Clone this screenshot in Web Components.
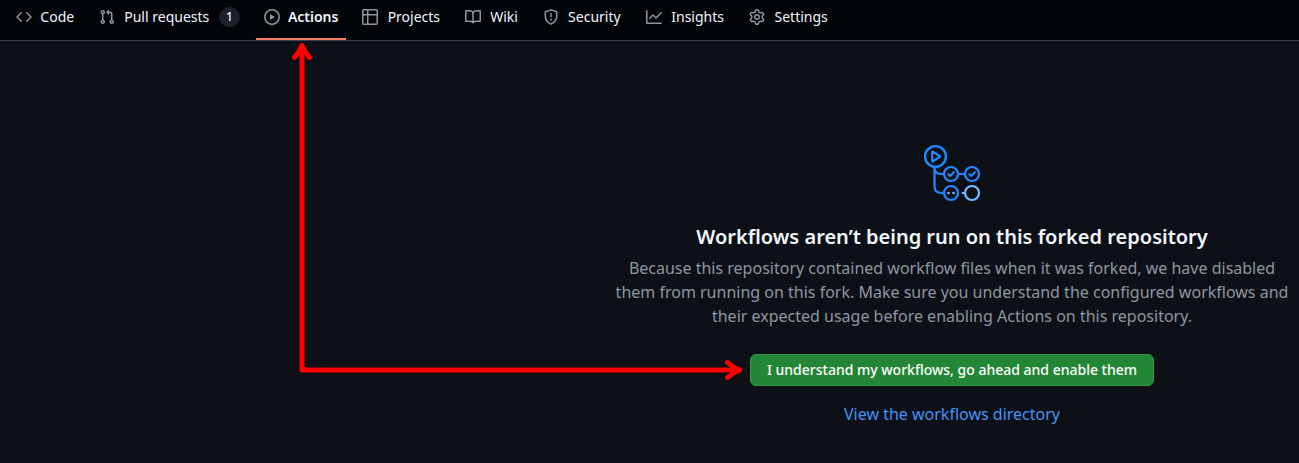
<!DOCTYPE html>
<html lang="en">
<head>
<meta charset="utf-8">
<meta name="viewport" content="width=device-width">
<title>Actions</title>
<style>
html, body { margin: 0; min-height: 100%; background: #0d1117; }
body { font-family: "Noto Sans", sans-serif; color: #f0f6fc; }
</style>
</head>
<body>
<actions-page></actions-page>
<script>
const icons = {
  code: '<path d="m11.28 3.22 4.25 4.25a.75.75 0 0 1 0 1.06l-4.25 4.25a.749.749 0 0 1-1.275-.326.749.749 0 0 1 .215-.734L13.94 8l-3.72-3.72a.749.749 0 0 1 .326-1.275.749.749 0 0 1 .734.215Zm-6.56 0a.751.751 0 0 1 1.042.018.751.751 0 0 1 .018 1.042L2.06 8l3.72 3.72a.749.749 0 0 1-.326 1.275.749.749 0 0 1-.734-.215L.47 8.53a.75.75 0 0 1 0-1.06Z"/>',
  pull: '<path d="M1.5 3.25a2.25 2.25 0 1 1 3 2.122v5.256a2.251 2.251 0 1 1-1.5 0V5.372A2.25 2.25 0 0 1 1.5 3.25Zm5.677-.177L9.573.677A.25.25 0 0 1 10 .854V2.5h1A2.5 2.5 0 0 1 13.5 5v5.628a2.251 2.251 0 1 1-1.5 0V5a1 1 0 0 0-1-1h-1v1.646a.25.25 0 0 1-.427.177L7.177 3.427a.25.25 0 0 1 0-.354ZM3.75 2.5a.75.75 0 1 0 0 1.5.75.75 0 0 0 0-1.5Zm0 9.5a.75.75 0 1 0 0 1.5.75.75 0 0 0 0-1.5Zm8.25.75a.75.75 0 1 0 1.5 0 .75.75 0 0 0-1.5 0Z"/>',
  play: '<path d="M8 0a8 8 0 1 1 0 16A8 8 0 0 1 8 0ZM1.5 8a6.5 6.5 0 1 0 13 0 6.5 6.5 0 0 0-13 0Zm4.879-2.773 4.264 2.559a.25.25 0 0 1 0 .428l-4.264 2.559A.25.25 0 0 1 6 10.559V5.442a.25.25 0 0 1 .379-.215Z"/>',
  table: '<path d="M0 1.75C0 .784.784 0 1.75 0h12.5C15.216 0 16 .784 16 1.75v12.5A1.75 1.75 0 0 1 14.25 16H1.75A1.75 1.75 0 0 1 0 14.25ZM6.5 6.5v8h7.75a.25.25 0 0 0 .25-.25V6.5Zm8-1.5V1.75a.25.25 0 0 0-.25-.25H6.5V5Zm-13 1.5v7.75c0 .138.112.25.25.25H5v-8ZM5 5V1.5H1.75a.25.25 0 0 0-.25.25V5Z"/>',
  book: '<path d="M0 1.75A.75.75 0 0 1 .75 1h4.253c1.227 0 2.317.59 3 1.501A3.743 3.743 0 0 1 11.006 1h4.245a.75.75 0 0 1 .75.75v10.5a.75.75 0 0 1-.75.75h-4.507a2.25 2.25 0 0 0-1.591.659l-.622.621a.75.75 0 0 1-1.06 0l-.622-.621A2.25 2.25 0 0 0 5.258 13H.75a.75.75 0 0 1-.75-.75Zm7.251 10.324.004-5.073-.002-2.253A2.25 2.25 0 0 0 5.003 2.5H1.5v9h3.757a3.75 3.75 0 0 1 1.994.574ZM8.755 4.75l-.004 7.322a3.752 3.752 0 0 1 1.992-.572H14.5v-9h-3.495a2.25 2.25 0 0 0-2.25 2.25Z"/>',
  shield: '<path fill="none" stroke="currentColor" stroke-width="1.5" stroke-linejoin="round" d="m8 .85 5.75 1.85V7c0 3.8-2.5 6.6-5.75 8.1C4.75 13.6 2.25 10.8 2.25 7V2.7Z"/><path d="M7.25 4.75a.75.75 0 0 1 1.5 0v3a.75.75 0 0 1-1.5 0Z"/><circle cx="8" cy="10.5" r="1"/>',
  graph: '<path d="M1.5 1.75V13.5h13.75a.75.75 0 0 1 0 1.5H.75a.75.75 0 0 1-.75-.75V1.75a.75.75 0 0 1 1.5 0Zm14.28 2.53-5.25 5.25a.75.75 0 0 1-1.06 0L7 7.06 4.28 9.78a.751.751 0 0 1-1.042-.018.751.751 0 0 1-.018-1.042l3.25-3.25a.75.75 0 0 1 1.06 0L10 7.94l4.72-4.72a.751.751 0 0 1 1.042.018.751.751 0 0 1 .018 1.042Z"/>',
  gear: '<path d="M8 0a8.2 8.2 0 0 1 .701.031C9.444.095 9.99.645 10.16 1.29l.288 1.107c.018.066.079.158.212.224.231.114.454.243.668.386.123.082.233.09.299.071l1.103-.303c.644-.176 1.392.021 1.82.63.27.385.506.792.704 1.218.315.675.111 1.422-.364 1.891l-.814.806c-.049.048-.098.147-.088.294.016.257.016.515 0 .772-.01.147.038.246.088.294l.814.806c.475.469.679 1.216.364 1.891a7.977 7.977 0 0 1-.704 1.217c-.428.61-1.176.807-1.82.63l-1.102-.302c-.067-.019-.177-.011-.3.071a5.909 5.909 0 0 1-.668.386c-.133.066-.194.158-.211.224l-.29 1.106c-.168.646-.715 1.196-1.458 1.26a8.006 8.006 0 0 1-1.402 0c-.743-.064-1.289-.614-1.458-1.26l-.289-1.106c-.018-.066-.079-.158-.212-.224a5.738 5.738 0 0 1-.668-.386c-.123-.082-.233-.09-.299-.071l-1.103.303c-.644.176-1.392-.021-1.82-.63a8.12 8.12 0 0 1-.704-1.218c-.315-.675-.111-1.422.363-1.891l.815-.806c.05-.048.098-.147.088-.294a6.214 6.214 0 0 1 0-.772c.01-.147-.038-.246-.088-.294l-.815-.806C.635 6.045.431 5.298.746 4.623a7.92 7.92 0 0 1 .704-1.217c.428-.61 1.176-.807 1.82-.63l1.102.302c.067.019.177.011.3-.071.214-.143.437-.272.668-.386.133-.066.194-.158.211-.224l.29-1.106C6.009.645 6.556.095 7.299.03 7.53.01 7.764 0 8 0Zm-.571 1.525c-.036.003-.108.036-.137.146l-.289 1.105c-.147.561-.549.967-.998 1.189-.173.086-.34.183-.5.29-.417.278-.97.423-1.529.27l-1.103-.303c-.109-.03-.175.016-.195.045-.22.312-.412.644-.573.99-.014.031-.021.11.059.19l.815.806c.411.406.562.957.53 1.456a4.709 4.709 0 0 0 0 .582c.032.499-.119 1.05-.53 1.456l-.815.806c-.081.08-.073.159-.059.19.162.346.353.677.573.989.02.03.085.076.195.046l1.102-.303c.56-.153 1.113-.008 1.53.27.161.107.328.204.501.29.447.222.85.629.997 1.189l.289 1.105c.029.109.101.143.137.146a6.6 6.6 0 0 0 1.142 0c.036-.003.108-.036.137-.146l.289-1.105c.147-.561.549-.967.998-1.189.173-.086.34-.183.5-.29.417-.278.97-.423 1.529-.27l1.103.303c.109.029.175-.016.195-.045.22-.313.411-.644.573-.99.014-.031.021-.11-.059-.19l-.815-.806c-.411-.406-.562-.957-.53-1.456a4.709 4.709 0 0 0 0-.582c-.032-.499.119-1.05.53-1.456l.815-.806c.081-.08.073-.159.059-.19a6.464 6.464 0 0 0-.573-.989c-.02-.03-.085-.076-.195-.046l-1.102.303c-.56.153-1.113.008-1.53-.27a4.44 4.44 0 0 0-.501-.29c-.447-.222-.85-.629-.997-1.189l-.289-1.105c-.029-.11-.101-.143-.137-.146a6.6 6.6 0 0 0-1.142 0ZM11 8a3 3 0 1 1-6 0 3 3 0 0 1 6 0ZM9.5 8a1.5 1.5 0 1 0-3.001.001A1.5 1.5 0 0 0 9.5 8Z"/>'
};

class NavTab extends HTMLElement {
  connectedCallback() {
    const label = this.textContent;
    const active = this.hasAttribute('active');
    this.attachShadow({ mode: 'open' }).innerHTML = `
      <style>
        :host { display: flex; position: relative; height: 40px; }
        a { display: flex; align-items: center; gap: 8px; height: 32px; margin-top: 1px; padding: 0 8px;
            color: #f0f6fc; font-size: 14px; line-height: 20px; text-decoration: none; white-space: nowrap; }
        svg { width: 16px; height: 16px; fill: currentColor; color: #8d96a0; flex: none; }
        .label { text-align: center; }
        /* Reserves the bold width, so that a tab keeps its size when selected. */
        .label::before { content: attr(data-label); display: block; height: 0; font-weight: 600; visibility: hidden; }
        :host([active]) .label { font-weight: 600; }
        :host([active])::after { content: ""; position: absolute; left: 0; right: 0; bottom: 0; height: 2px; background: #f78166; }
        .count { box-sizing: border-box; min-width: 20px; padding: 0 6px; border: 1px solid #1c2027; border-radius: 20px;
                 background: #1c2027; font-size: 12px; font-weight: 500; line-height: 18px; text-align: center; }
      </style>
      <a href="#"${active ? ' aria-current="page"' : ''}>
        <svg viewBox="0 0 16 16" aria-hidden="true">${icons[this.getAttribute('icon')]}</svg>
        <span class="label" data-label="${label}"><slot></slot></span>
        ${this.hasAttribute('count') ? `<span class="count">${this.getAttribute('count')}</span>` : ''}
      </a>`;
  }
}

class RepoNav extends HTMLElement {
  connectedCallback() {
    this.attachShadow({ mode: 'open' }).innerHTML = `
      <style>
        :host { display: block; background: #010409; border-bottom: 1px solid #3d444d; }
        nav { display: flex; gap: 8px; padding: 0 8px; overflow: hidden; }
      </style>
      <nav aria-label="Repository"><slot></slot></nav>`;
  }
}

class WorkflowMark extends HTMLElement {
  connectedCallback() {
    this.attachShadow({ mode: 'open' }).innerHTML = `
      <style>:host { display: block; width: 58px; height: 58px; } svg { display: block; width: 100%; height: 100%; }</style>
      <svg viewBox="0 0 58 58" fill="none" stroke="#2188ff" stroke-width="2.2" stroke-linecap="round" stroke-linejoin="round" aria-hidden="true">
        <circle cx="12.5" cy="12.5" r="10.4" stroke-width="2.4"/>
        <path d="M9.2 8.2v8.6q0 .8.7.4l6.8-4.2q.7-.5 0-1L9.9 7.8q-.7-.4-.7.4Z"/>
        <path d="M11.5 23.5V42q0 7 7 7h1.5M11.5 23.5q0 6.5 6.500 6.500h2M36 30h5"/>
        <circle cx="28" cy="30" r="7"/><circle cx="49" cy="30" r="7"/><circle cx="28" cy="49" r="7"/>
        <path d="m25.300 30.300 1.800 1.800 3.700-3.900M46.300 30.300l1.800 1.800 3.700-3.900" stroke-width="2.100"/>
        <g fill="#79b8ff" stroke="none"><circle cx="25.500" cy="49" r="1.300"/><circle cx="30.500" cy="49" r="1.300"/></g>
        <g stroke="#79b8ff"><circle cx="49" cy="49" r="7"/><path d="M39.500 49h1.500"/></g>
      </svg>`;
  }
}

class PrimaryButton extends HTMLElement {
  connectedCallback() {
    this.attachShadow({ mode: 'open' }).innerHTML = `
      <style>
        :host { display: block; }
        button { display: block; height: 32px; padding: 0 16px; border: 1px solid #379349; border-radius: 6px; background: #238636;
                 color: #fff; font-family: inherit; font-size: 14px; font-weight: 500; line-height: 20px; white-space: nowrap; }
      </style>
      <button type="button"><slot></slot></button>`;
  }
}

class BlankSlate extends HTMLElement {
  connectedCallback() {
    this.attachShadow({ mode: 'open' }).innerHTML = `
      <style>
        :host { display: flex; flex-direction: column; align-items: center; box-sizing: border-box; max-width: 694px;
                padding: 103px 8px 36px; text-align: center; }
        h1 { margin: 20px 0 4px; font-size: 20px; font-weight: 600; line-height: 30px; }
        p { margin: 0; color: #8d96a0; font-size: 16px; line-height: 24px; }
        primary-button { margin: 26px 0 16px; }
        a { color: #4493f8; font-size: 16px; line-height: 24px; text-decoration: none; }
      </style>
      <workflow-mark></workflow-mark>
      <h1><slot name="title"></slot></h1>
      <p><slot></slot></p>
      <primary-button><slot name="action"></slot></primary-button>
      <a href="#"><slot name="link"></slot></a>`;
  }
}

class GuideArrow extends HTMLElement {
  connectedCallback() {
    this.attachShadow({ mode: 'open' }).innerHTML = `
      <style>
        :host { position: absolute; left: 288px; top: 40px; width: 460px; height: 350px; pointer-events: none; }
        svg { display: block; filter: drop-shadow(1px 1px 1px #0009); }
      </style>
      <svg width="460" height="350" viewBox="288 40 460 350" fill="none" stroke="#f00" stroke-width="5" stroke-linecap="round" stroke-linejoin="round" aria-hidden="true">
        <path d="M302 369V47M302 370H738"/>
        <path d="M294.500 57.500q4-4.500 7.500-12 3.500 7.500 7.500 12M727.500 362.500q5 4.500 12 7.500-7 3-12 7.500"/>
      </svg>`;
  }
}

class ActionsPage extends HTMLElement {
  connectedCallback() {
    this.attachShadow({ mode: 'open' }).innerHTML = `
      <style>
        :host { display: block; position: relative; }
        main { display: flex; justify-content: flex-end; }
      </style>
      <repo-nav>
        <nav-tab icon="code">Code</nav-tab>
        <nav-tab icon="pull" count="1">Pull requests</nav-tab>
        <nav-tab icon="play" active>Actions</nav-tab>
        <nav-tab icon="table">Projects</nav-tab>
        <nav-tab icon="book">Wiki</nav-tab>
        <nav-tab icon="shield">Security</nav-tab>
        <nav-tab icon="graph">Insights</nav-tab>
        <nav-tab icon="gear">Settings</nav-tab>
      </repo-nav>
      <main>
        <blank-slate>
          <span slot="title">Workflows aren’t being run on this forked repository</span>
          Because this repository contained workflow files when it was forked, we have disabled them from running on this fork. Make sure you understand the configured workflows and their expected usage before enabling Actions on this repository.
          <span slot="action">I understand my workflows, go ahead and enable them</span>
          <span slot="link">View the workflows directory</span>
        </blank-slate>
      </main>
      <guide-arrow></guide-arrow>`;
  }
}

customElements.define('nav-tab', NavTab);
customElements.define('repo-nav', RepoNav);
customElements.define('workflow-mark', WorkflowMark);
customElements.define('primary-button', PrimaryButton);
customElements.define('blank-slate', BlankSlate);
customElements.define('guide-arrow', GuideArrow);
customElements.define('actions-page', ActionsPage);
</script>
</body>
</html>
